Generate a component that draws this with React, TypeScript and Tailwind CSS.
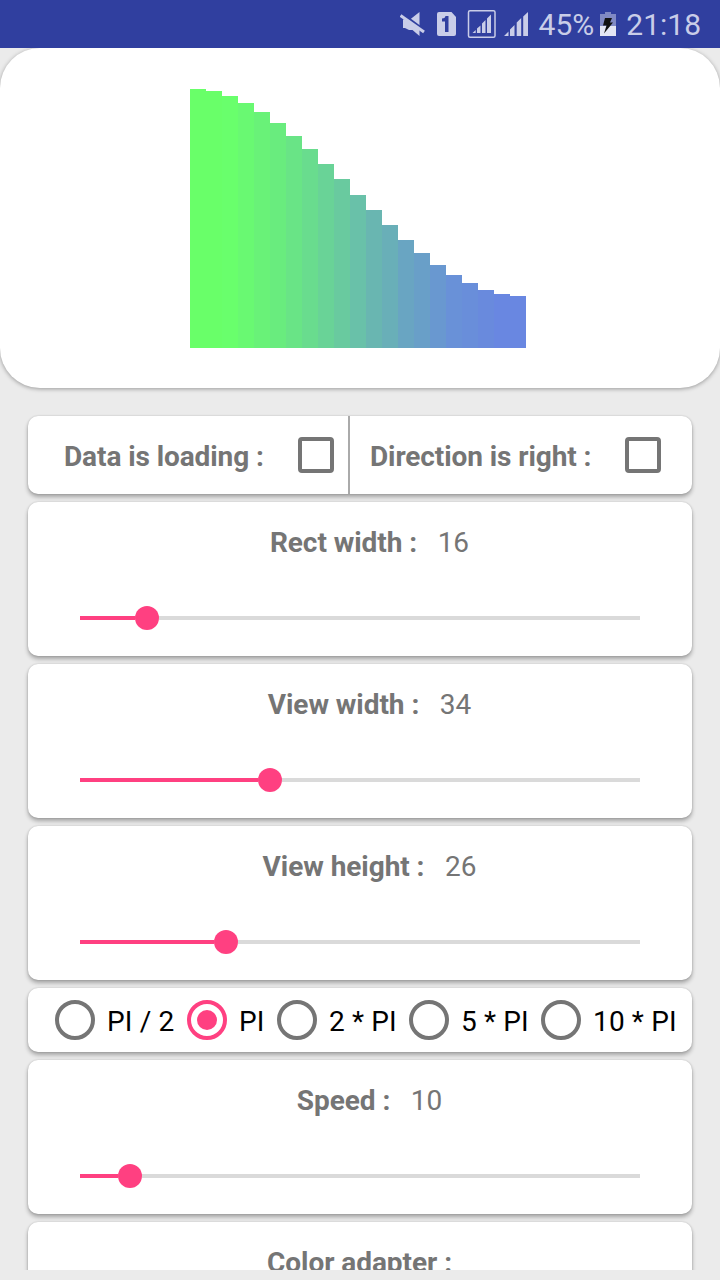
import React from "react";

const bars: [number, string][] = [
  [259, "#69ff69"],
  [257, "#69ff69"],
  [252, "#69ff6c"],
  [245, "#69f972"],
  [236, "#69f278"],
  [225, "#69ec7e"],
  [212, "#69e486"],
  [199, "#69dc8e"],
  [184, "#69d397"],
  [169, "#69ca9f"],
  [153, "#69c1a9"],
  [138, "#69b6b1"],
  [123, "#69afb8"],
  [108, "#69a5c2"],
  [95, "#699fc8"],
  [83, "#6998d0"],
  [73, "#6991d8"],
  [65, "#698eda"],
  [58, "#698add"],
  [54, "#6987e1"],
  [52, "#6987e1"],
];

function StatusBar() {
  return (
    <header className="flex h-12 shrink-0 items-center justify-end bg-[#303f9f] pr-[19px] text-[30px] text-[#c9cde8]">
      <svg width="138" height="48" viewBox="400 0 138 48" className="mr-[0.5px] shrink-0" fill="#c9cde8">
        <path d="M403 19.500h7l9.500-7.500v24l-7-6h-3.500l-4-2h-2z" />
        <path d="M400.500 12.500L426 31.500" stroke="#303f9f" strokeWidth="2.500" fill="none" />
        <path d="M400.500 15.500L424 32" stroke="#c9cde8" strokeWidth="3" fill="none" />
        <path d="M439 12h12.500l4.500 5v17a2 2 0 0 1-2 2h-15a2 2 0 0 1-2-2V14a2 2 0 0 1 2-2z" />
        <path d="M442 18.500q3 0 3.500-2.500h3v16h-3.500V21.500h-3z" fill="#303f9f" />
        <rect x="468.500" y="10.700" width="26.500" height="26.600" rx="1.500" fill="none" stroke="#c9cde8" strokeWidth="1.500" />
        <path d="M472.500 33l3.200-3v3zM477 28.500l3.500-3V33H477zM482 23.500l3.500-3.500v13H482zM487 18.500l4-4V33h-4z" />
        <path d="M504 36l4.500-4.500V36zM510 29.500l4.500-4.500v11H510zM516.700 22.500l4.500-4.500v18h-4.500zM523.200 16.500l4.800-4.500v24h-4.800z" />
      </svg>
      <span className="mr-1.5 pt-px">45%</span>
      <svg width="16" height="24" viewBox="0 0 16 24" className="mr-[10px] shrink-0">
        <path d="M5 0h6v2h5v12H0V2h5z" fill="#8089c4" />
        <path d="M0 14h16v10H0z" fill="#e3e5f4" />
        <path d="M5 6h7l-2 4.500h3L4 21.500l2.500-8H3z" fill="#111" />
      </svg>
      <span className="pt-px">21:18</span>
    </header>
  );
}

const card = "bg-white rounded-[10px] shadow-[0_3px_4px_rgba(0,0,0,0.3),0_0_2px_rgba(0,0,0,0.18)]";

function Setting({ label, value, fill }: { label: string; value?: string; fill?: number }) {
  return (
    <section className={`${card} flex h-[154px] shrink-0 flex-col px-[52px] pt-[25px]`}>
      <div className="flex h-8 items-center justify-center leading-8">
        <b className={`tracking-[-0.05px] ${value ? "ml-[19px]" : "mr-px"}`}>{label}</b>
        {value && <span className="ml-[20.5px]">{value}</span>}
      </div>
      {fill !== undefined && (
        <div className="mt-[47px] flex h-6 items-center">
          <div className="h-1 bg-[#ff4081]" style={{ width: fill - 12 }} />
          <div className="size-6 shrink-0 rounded-full bg-[#ff4081]" />
          <div className="h-1 grow bg-[#dadada]" />
        </div>
      )}
    </section>
  );
}

function Radio({ label, width, checked }: { label: string; width: string; checked?: boolean }) {
  return (
    <label className={`flex shrink-0 items-center whitespace-nowrap ${width}`}>
      <span
        className={`mr-3 flex size-10 shrink-0 items-center justify-center rounded-full border-4 ${
          checked ? "border-[#ff4081]" : "border-[#757575]"
        }`}
      >
        {checked && <span className="size-5 rounded-full bg-[#ff4081]" />}
      </span>
      <span className="pt-[3px] tracking-[0.15px]">{label}</span>
    </label>
  );
}

function Box() {
  return <span className="size-9 shrink-0 rounded-[4px] border-4 border-[#757575]" />;
}

export default function App() {
  return (
    <div className="flex h-[1280px] w-[720px] flex-col overflow-hidden bg-[#ebebeb] font-['Roboto',sans-serif] text-[28px] text-[#757575]">
      <StatusBar />
      <main className="flex h-[1222px] flex-col overflow-hidden">
        <section className="flex h-[340px] shrink-0 items-end rounded-[40px] bg-white pb-10 pl-[190px] shadow-[0_1px_4px_rgba(0,0,0,0.35)]">
          {bars.map(([height, color], i) => (
            <div key={i} className="w-4" style={{ height, backgroundColor: color }} />
          ))}
        </section>
        <div className="flex flex-col gap-2 px-7 pt-7">
          <section className={`${card} flex h-[78px] shrink-0 items-center whitespace-nowrap font-bold tracking-[-0.09px]`}>
            <div className="flex h-full w-[322px] items-center justify-between border-r-2 border-[#aaa] pl-9 pr-[14px]">
              <span className="pt-1">Data is loading :</span>
              <Box />
            </div>
            <div className="flex grow items-center justify-between pl-5 pr-[31px]">
              <span className="pt-1">Direction is right :</span>
              <Box />
            </div>
          </section>
          <Setting label="Rect width :" value="16" fill={67} />
          <Setting label="View width :" value="34" fill={190} />
          <Setting label="View height :" value="26" fill={146} />
          <section className={`${card} flex h-16 shrink-0 items-center pl-[27px] text-black`}>
            <Radio label="PI / 2" width="w-[132px]" />
            <Radio label="PI" width="w-[90px]" checked />
            <Radio label="2 * PI" width="w-[132px]" />
            <Radio label="5 * PI" width="w-[132px]" />
            <Radio label="10 * PI" width="w-[140px]" />
          </section>
          <Setting label="Speed :" value="10" fill={50} />
          <Setting label="Color adapter :" />
        </div>
      </main>
    </div>
  );
}
